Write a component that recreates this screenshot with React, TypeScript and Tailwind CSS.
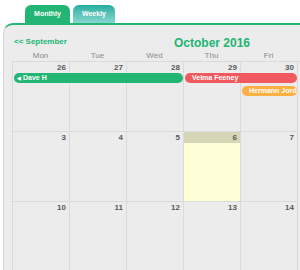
import React from 'react';

type Ev = { title: string; col: number; span: number; row: number; color: string; arrow?: boolean };

const days = ['Mon', 'Tue', 'Wed', 'Thu', 'Fri'];

const weeks: { dates: number[]; today?: number; events: Ev[] }[] = [
  {
    dates: [26, 27, 28, 29, 30],
    events: [
      { title: 'Dave H', col: 1, span: 3, row: 2, color: 'bg-[#22b573]', arrow: true },
      { title: 'Velma Feeney', col: 4, span: 2, row: 2, color: 'bg-[#f05a5e]' },
      { title: 'Hermann Jordan', col: 5, span: 1, row: 3, color: 'bg-[#fbb041]' },
    ],
  },
  { dates: [3, 4, 5, 6, 7], today: 3, events: [] },
  { dates: [10, 11, 12, 13, 14], events: [] },
];

const colStart = ['col-start-1', 'col-start-2', 'col-start-3', 'col-start-4', 'col-start-5'];
const colSpan = ['col-span-1', 'col-span-2', 'col-span-3'];
const rowStart = ['row-start-1', 'row-start-2', 'row-start-3'];

const App: React.FC = () => {
  return (
    <div className="w-[300px] h-[270px] overflow-hidden bg-white font-['Liberation_Sans',Arial,sans-serif]">
      {/* Tabs */}
      <div className="flex gap-[3px] pl-[25px] pt-[5px] h-[23px]">
        <div className="w-[45px] h-[18px] rounded-t-[6px] bg-[#22b573] text-white text-[7px] font-bold flex items-center justify-center">
          Monthly
        </div>
        <div className="w-[42px] h-[18px] rounded-t-[6px] bg-gradient-to-b from-[#1fae9e] to-[#85d7d0] text-white text-[7px] font-bold flex items-center justify-center">
          Weekly
        </div>
      </div>

      {/* Panel */}
      <div className="ml-[3px] w-[430px] h-[260px] bg-[#ececec] border-t-2 border-t-[#22b573] border-l border-l-[#d6d6d6] rounded-tl-[10px] pl-[8px]">
        <div className="relative w-[400px] h-[27px]">
          <span className="absolute left-[2px] top-[13px] text-[8px] font-bold text-[#22b573] leading-none">&lt;&lt; September</span>
          <div className="pt-[12px] text-center text-[12px] font-bold text-[#22b573] leading-none">October 2016</div>
        </div>
        <div className="grid grid-cols-[repeat(5,57px)] h-[9px] text-[8px] text-[#8a8a8a] leading-none">
          {days.map(d => (
            <div key={d} className="text-center">{d}</div>
          ))}
        </div>
        <div className="border-l border-t border-[#dadada] w-[400px]">
          {weeks.map((w, wi) => (
            <div key={wi} className="grid grid-cols-[repeat(5,57px)] grid-rows-[11px_13px_11px_1fr] h-[70px]">
              {w.dates.map((d, i) => (
                <div
                  key={'c' + i}
                  className={`${colStart[i]} row-start-1 row-span-4 border-r border-b border-[#dadada] ${w.today === i ? 'bg-[#ffffd7]' : ''}`}
                />
              ))}
              {w.dates.map((d, i) => (
                <div
                  key={'n' + i}
                  className={`${colStart[i]} row-start-1 mr-[1px] h-[11px] text-right pr-[3px] text-[8px] font-bold text-[#5a5a5a] leading-[12px] ${w.today === i ? 'bg-[#d5d6b5]' : ''}`}
                >
                  {d}
                </div>
              ))}
              {w.events.map(e => (
                <div
                  key={e.title}
                  className={`${colStart[e.col - 1]} ${colSpan[e.span - 1]} ${rowStart[e.row - 1]} ${e.color} h-[10px] ml-[1px] mr-[1px] rounded-[5px] text-white text-[7px] font-bold leading-[10px] ${e.arrow ? 'pl-[3px]' : 'pl-[7px]'} whitespace-nowrap overflow-hidden flex items-center gap-[2px]`}
                >
                  {e.arrow && <span className="text-[5px] leading-none">&#9664;</span>}
                  {e.title}
                </div>
              ))}
            </div>
          ))}
        </div>
      </div>
    </div>
  );
};

export default App;
